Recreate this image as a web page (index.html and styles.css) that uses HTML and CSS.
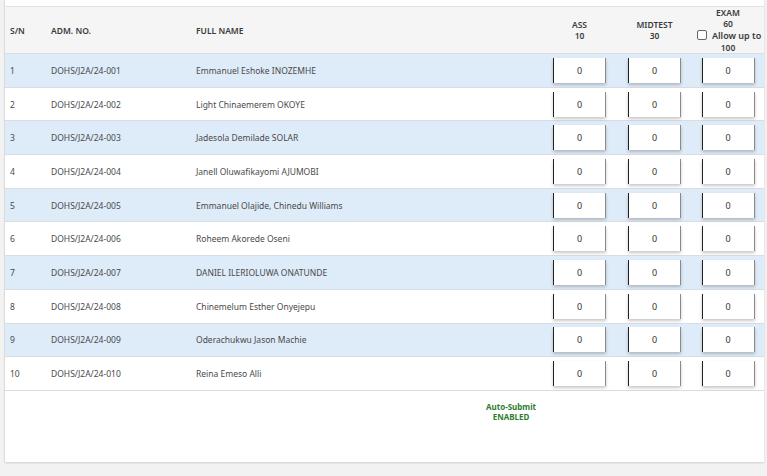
FILE: index.html
```html
<!DOCTYPE html>
<html>
<head>
<meta charset="utf-8">
<link rel="stylesheet" href="styles.css">
</head>
<body>
<div class="card">
  <table class="scores">
    <colgroup>
      <col class="c-sn"><col class="c-adm"><col class="c-name"><col class="c-score"><col class="c-score"><col class="c-exam">
    </colgroup>
    <thead>
      <tr>
        <th class="left">S/N</th>
        <th class="left">ADM. NO.</th>
        <th class="left">FULL NAME</th>
        <th>ASS<br>10</th>
        <th>MIDTEST<br>30</th>
        <th>EXAM<br>60<br><label class="allow"><input type="checkbox" class="chk"> Allow up to</label><br>100</th>
      </tr>
    </thead>
    <tbody>
      <tr class="odd"><td>1</td><td>DOHS/J2A/24-001</td><td>Emmanuel Eshoke INOZEMHE</td><td><input class="score" value="0"></td><td><input class="score" value="0"></td><td><input class="score" value="0"></td></tr>
      <tr><td>2</td><td>DOHS/J2A/24-002</td><td>Light Chinaemerem OKOYE</td><td><input class="score" value="0"></td><td><input class="score" value="0"></td><td><input class="score" value="0"></td></tr>
      <tr class="odd"><td>3</td><td>DOHS/J2A/24-003</td><td>Jadesola Demilade SOLAR</td><td><input class="score" value="0"></td><td><input class="score" value="0"></td><td><input class="score" value="0"></td></tr>
      <tr><td>4</td><td>DOHS/J2A/24-004</td><td>Janell Oluwafikayomi AJUMOBI</td><td><input class="score" value="0"></td><td><input class="score" value="0"></td><td><input class="score" value="0"></td></tr>
      <tr class="odd"><td>5</td><td>DOHS/J2A/24-005</td><td>Emmanuel Olajide, Chinedu Williams</td><td><input class="score" value="0"></td><td><input class="score" value="0"></td><td><input class="score" value="0"></td></tr>
      <tr><td>6</td><td>DOHS/J2A/24-006</td><td>Roheem Akorede Oseni</td><td><input class="score" value="0"></td><td><input class="score" value="0"></td><td><input class="score" value="0"></td></tr>
      <tr class="odd"><td>7</td><td>DOHS/J2A/24-007</td><td>DANIEL ILERIOLUWA ONATUNDE</td><td><input class="score" value="0"></td><td><input class="score" value="0"></td><td><input class="score" value="0"></td></tr>
      <tr><td>8</td><td>DOHS/J2A/24-008</td><td>Chinemelum Esther Onyejepu</td><td><input class="score" value="0"></td><td><input class="score" value="0"></td><td><input class="score" value="0"></td></tr>
      <tr class="odd"><td>9</td><td>DOHS/J2A/24-009</td><td>Oderachukwu Jason Machie</td><td><input class="score" value="0"></td><td><input class="score" value="0"></td><td><input class="score" value="0"></td></tr>
      <tr><td>10</td><td>DOHS/J2A/24-010</td><td>Reina Emeso Alli</td><td><input class="score" value="0"></td><td><input class="score" value="0"></td><td><input class="score" value="0"></td></tr>
    </tbody>
  </table>
  <div class="footer">
    <div class="auto">Auto-Submit<br>ENABLED</div>
  </div>
</div>
</body>
</html>
```

FILE: styles.css
```css
html, body {
  margin: 0;
  padding: 0;
}
body {
  background: #f2f2f2;
  font-family: "Noto Sans", "Open Sans", sans-serif;
  color: #333;
  height: 476px;
  overflow: hidden;
}
.card {
  background: #fff;
  margin: 0 3px 0 5px;
  padding-top: 6px;
  box-shadow: 0 1px 2px rgba(0,0,0,0.15), -1px 0 0 #e6e6e6;
}
.scores {
  width: 100%;
  border-collapse: collapse;
  table-layout: fixed;
}
.c-sn { width: 41px; }
.c-adm { width: 145px; }
.c-name { width: 351px; }
.c-score { width: 75px; }
.c-exam { width: 72px; }

.scores th {
  background: #f5f5f5;
  border-top: 1px solid #e2e2e2;
  border-bottom: 1px solid #dcdcdc;
  font-size: 8.5px;
  font-weight: 600;
  line-height: 11px;
  height: 46px;
  padding: 0 5px;
  text-align: center;
  vertical-align: middle;
  color: #3a3a3a;
  box-sizing: border-box;
}
.scores th.left {
  text-align: left;
}
.allow {
  display: inline-flex;
  align-items: center;
  gap: 5px;
  white-space: nowrap;
  height: 12px;
  font-size: 9px;
}
.chk {
  appearance: none;
  -webkit-appearance: none;
  width: 10px;
  height: 10px;
  margin: 0;
  border: 1px solid #666;
  border-radius: 2px;
  background: #fff;
}
.scores td {
  font-size: 8.5px;
  color: #4a4a4a;
  height: 33.7px;
  padding: 0 5px;
  border-bottom: 1px solid #d9dde2;
  box-sizing: border-box;
  white-space: nowrap;
}
.scores td:nth-child(n+4) {
  text-align: center;
  padding: 0;
}
.scores tr.odd td {
  background: #deebf8;
}
.score {
  width: 53px;
  height: 25px;
  box-sizing: border-box;
  border: none;
  border-left: 1.5px solid #222;
  border-right: 1px solid #8a8a8a;
  background: #fff;
  box-shadow: 0 2px 3px rgba(0,0,0,0.22);
  text-align: center;
  font-family: "Noto Sans", sans-serif;
  font-size: 9px;
  color: #333;
  padding: 0;
  vertical-align: middle;
}
.footer {
  height: 71px;
  padding-top: 11px;
  box-sizing: border-box;
}
.auto {
  margin-left: 470px;
  width: 72px;
  text-align: center;
  color: #2e7d32;
  font-weight: 700;
  font-size: 8px;
  line-height: 10px;
}
```
